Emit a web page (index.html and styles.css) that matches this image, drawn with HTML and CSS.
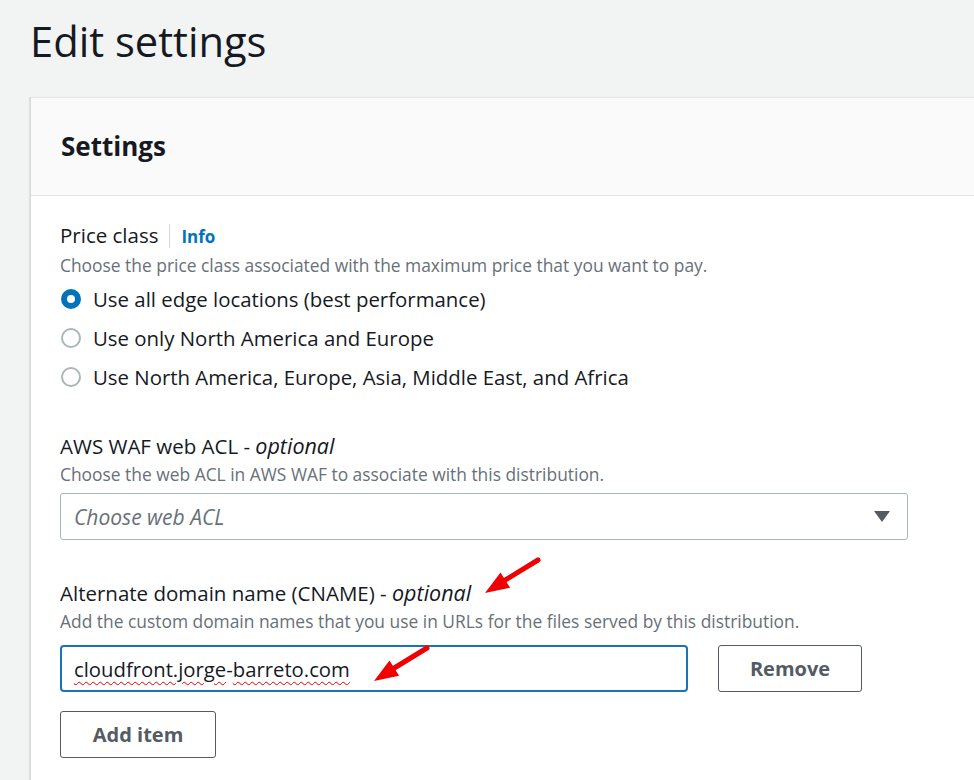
FILE: index.html
```html
<!DOCTYPE html>
<html lang="en">
<head>
<meta charset="utf-8">
<title>Edit settings</title>
<link rel="stylesheet" href="styles.css">
</head>
<body>
<div class="page">
  <h1 class="title">Edit settings</h1>
  <div class="panel">
    <div class="panel-header"><h2>Settings</h2></div>
    <div class="panel-body">
      <div class="field field-price">
        <div class="label">Price class<span class="divider"></span><a class="info">Info</a></div>
        <div class="desc">Choose the price class associated with the maximum price that you want to pay.</div>
        <div class="radios">
          <label class="radio"><span class="dot checked"></span>Use all edge locations (best performance)</label>
          <label class="radio"><span class="dot"></span>Use only North America and Europe</label>
          <label class="radio"><span class="dot"></span>Use North America, Europe, Asia, Middle East, and Africa</label>
        </div>
      </div>
      <div class="field field-waf">
        <div class="label">AWS WAF web ACL - <i>optional</i></div>
        <div class="desc">Choose the web ACL in AWS WAF to associate with this distribution.</div>
        <div class="select"><span class="placeholder">Choose web ACL</span><span class="caret"></span></div>
      </div>
      <div class="field">
        <div class="label">Alternate domain name (CNAME) - <i>optional</i></div>
        <div class="desc">Add the custom domain names that you use in URLs for the files served by this distribution.</div>
        <div class="row">
          <div class="input"><span class="spell">cloudfront.jorge</span>-<span class="spell">barreto.com</span></div>
          <button class="btn remove">Remove</button>
        </div>
        <button class="btn add">Add item</button>
      </div>
    </div>
  </div>
  <svg class="arrow arrow1" width="60" height="40" viewBox="0 0 60 40"><line x1="56" y1="4" x2="20" y2="26" stroke="#f00000" stroke-width="5" stroke-linecap="round"/><polygon points="3,37 18.5,16.6 28.1,31.8" fill="#f00000"/></svg>
  <svg class="arrow arrow2" width="60" height="40" viewBox="0 0 60 40"><line x1="56" y1="4" x2="20" y2="26" stroke="#f00000" stroke-width="5" stroke-linecap="round"/><polygon points="3,37 18.5,16.6 28.1,31.8" fill="#f00000"/></svg>
</div>
</body>
</html>
```
FILE: styles.css
```css
html, body { margin: 0; padding: 0; }
body {
  background: #f2f3f3;
  font-family: "Open Sans", "Noto Sans", sans-serif;
  color: #16191f;
  overflow: hidden;
  width: 974px;
  height: 780px;
}
.page { position: relative; padding-left: 30px; }
.title {
  margin: 0;
  padding-top: 13px;
  font-size: 41.7px;
  font-weight: 400;
  line-height: 56px;
  height: 84px;
}
.panel {
  background: #fff;
  border-top: 1px solid #e6e6e6;
  border-left: 1px solid #d5dbdb;
  box-shadow: -1px 0 1px rgba(0,0,0,0.08);
  margin-right: -20px;
  height: 700px;
}
.panel-header {
  background: #fafafa;
  border-bottom: 1px solid #e3e5e5;
  height: 98px;
  box-sizing: border-box;
  padding: 28px 30px 0 30px;
}
.panel-header h2 { margin: 0; font-size: 26px; font-weight: 700; line-height: 40px; }
.panel-body { padding: 25px 29px 0 29px; }
.field-price { margin-bottom: 36px; }
.field-waf { margin-bottom: 39px; }
.label { font-size: 20.5px; line-height: 28px; }
.label i { font-size: 21.5px; }
.divider { display: inline-block; width: 1px; height: 24px; background: #d5dbdb; margin: 0 11px 0 11px; vertical-align: -5px; }
.info { color: #0073bb; font-weight: 700; font-size: 17px; }
.desc { font-size: 17.4px; color: #687078; line-height: 28px; }
.radio { display: flex; align-items: center; font-size: 20.4px; height: 39px; }
.dot {
  width: 16px; height: 16px; border: 2px solid #aab7b8; border-radius: 50%;
  margin: 0 12px 0 1px; box-sizing: content-box; flex: none;
}
.dot.checked { width: 8px; height: 8px; border: 6px solid #0073bb; }
.select {
  margin-top: 5px;
  width: 848px; height: 47px; box-sizing: border-box;
  border: 1px solid #aab7b8; border-radius: 3px;
  display: flex; align-items: center; justify-content: space-between;
  padding: 0 17px 0 13px;
}
.placeholder { font-style: italic; color: #687078; font-size: 21px; }
.caret { width: 0; height: 0; border-left: 8px solid transparent; border-right: 8px solid transparent; border-top: 11px solid #545b64; }
.row { display: flex; gap: 30px; margin-top: 10px; }
.input {
  width: 628px; height: 47px; box-sizing: border-box;
  border: 2px solid #1a73b5; border-radius: 4px;
  display: flex; align-items: center; padding-left: 12px;
  font-size: 20.3px;
}
.spell { text-decoration: underline wavy #e00000; text-decoration-thickness: 1px; text-underline-offset: 4px; }
.btn {
  font-family: inherit; background: #fff; color: #545b64;
  border: 1px solid #545b64; border-radius: 3px;
  font-weight: 700; font-size: 20px; height: 47px; padding: 0;
  display: block;
}
.remove { width: 144px; }
.add { width: 156px; margin-top: 19px; }
.arrow { position: absolute; }
.arrow1 { left: 482px; top: 556px; }
.arrow2 { left: 371px; top: 644px; }
```
